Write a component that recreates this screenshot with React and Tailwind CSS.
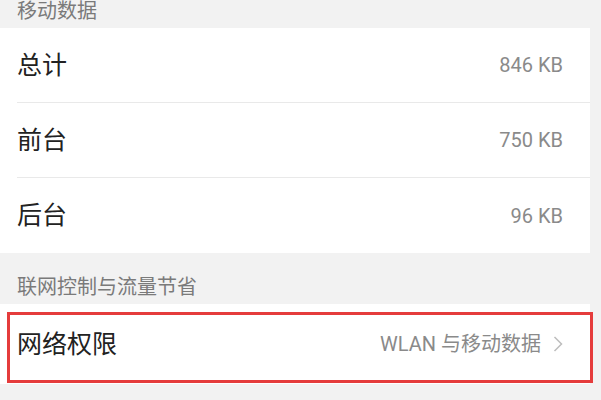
const font = { fontFamily: 'Roboto, "Noto Sans CJK SC", sans-serif' };

const Row = ({ title, value, last }) => (
  <div className="h-[75px] pl-[17px] bg-white">
    <div
      className={`h-full flex items-center justify-between pr-[27px] ${
        last ? "" : "border-b border-[#e9e9e9]"
      }`}
    >
      <span className="text-[25px] leading-none text-[#222222]">{title}</span>
      <span className="text-[20px] leading-none text-[#8a8a8a]">{value}</span>
    </div>
  </div>
);

const App = () => {
  return (
    <div className="w-[601px] h-[400px] bg-[#f2f2f2] overflow-hidden" style={font}>
      <div className="relative w-[590px]">
        <div className="h-[28px] pl-[17px] text-[20px] leading-[22px] text-[#7a7a7a]">
          移动数据
        </div>
        <Row title="总计" value="846 KB" />
        <Row title="前台" value="750 KB" />
        <Row title="后台" value="96 KB" last />
        <div className="h-[51px] pl-[17px] pt-[24px] text-[20px] leading-[20px] text-[#7a7a7a]">
          联网控制与流量节省
        </div>
        <div className="h-[80px] bg-white pl-[17px] pr-[27px] flex items-center justify-between">
          <span className="text-[25px] leading-none text-[#222222]">网络权限</span>
          <div className="flex items-center gap-[12px]">
            <span className="text-[20px] leading-none text-[#8a8a8a]">WLAN 与移动数据</span>
            <svg width="10" height="16" viewBox="0 0 10 16" fill="none">
              <path d="M1.5 1 L8.5 8 L1.5 15" stroke="#bdbdbd" strokeWidth="1.5" />
            </svg>
          </div>
        </div>
        {/* annotation box */}
        <div className="absolute left-[7px] top-[312px] w-[586px] h-[71px] border-[3px] border-[#e53c3c] pointer-events-none" />
      </div>
    </div>
  );
};

export default App;
